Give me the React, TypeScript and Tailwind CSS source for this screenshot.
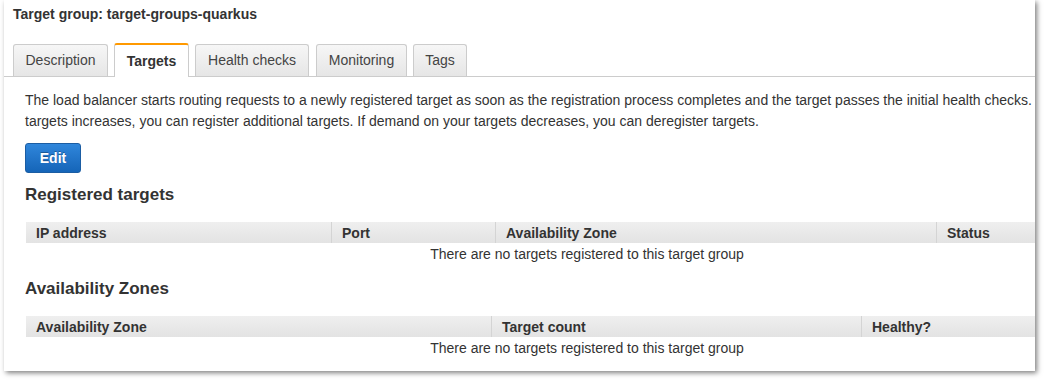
const tabs = [
  { label: "Description", cls: "w-[95px]" },
  { label: "Targets", cls: "ml-[6px] w-[75px]" },
  { label: "Health checks", cls: "ml-[6px] w-[114px]" },
  { label: "Monitoring", cls: "ml-[7px] w-[91px]" },
  { label: "Tags", cls: "ml-[6px] w-[54px]" },
];

const font = { fontFamily: '"Liberation Sans", Arial, sans-serif' };

function Table({ cols, widths }: { cols: string[]; widths: string[] }) {
  return (
    <div className="ml-[1px] w-[1122px]">
      <div className="flex h-[21px] bg-gradient-to-b from-[#efefef] to-[#e3e3e3]">
        {cols.map((c, i) => (
          <div
            key={c}
            className={`${widths[i]} flex items-center pl-[10px] text-[14px] font-bold leading-none text-[#333] ${i > 0 ? "border-l border-[#d4d4d4]" : ""}`}
          >
            {c}
          </div>
        ))}
      </div>
      <div className="h-[22px] text-center text-[14px] leading-[22px] text-[#333]">
        There are no targets registered to this target group
      </div>
    </div>
  );
}

export default function App() {
  return (
    <div className="h-[380px] w-[1044px] overflow-hidden bg-white" style={font}>
      <div className="ml-[4px] h-[371px] w-[1031px] overflow-hidden bg-white shadow-[2px_2px_5px_rgba(0,0,0,0.5)]">
        <div className="pl-[9px] pt-[6px] text-[14px] font-bold leading-[16px] text-[#333]">
          Target group: target-groups-quarkus
        </div>

        <div className="mt-[21px] flex items-end border-b border-[#cccccc] pl-[9px]">
          {tabs.map((t) =>
            t.label === "Targets" ? (
              <div
                key={t.label}
                className={`${t.cls} -mb-px flex h-[34px] items-center justify-center rounded-t-[3px] border border-b-0 border-[#cccccc] border-t-2 border-t-[#f90] bg-white text-[14px] font-bold text-[#333]`}
              >
                {t.label}
              </div>
            ) : (
              <div
                key={t.label}
                className={`${t.cls} flex h-[32px] items-center justify-center rounded-t-[3px] border border-b-0 border-[#cccccc] bg-gradient-to-b from-[#f6f6f6] to-[#e6e6e6] text-[14px] text-[#444]`}
              >
                {t.label}
              </div>
            )
          )}
        </div>

        <div className="pl-[21px]">
          <div className="mt-[13px] whitespace-nowrap text-[14px] leading-[21px] text-[#333]">
            <div>
              The load balancer starts routing requests to a newly registered target as soon as the registration process completes and the target passes the initial health checks. If demand on your
            </div>
            <div>
              targets increases, you can register additional targets. If demand on your targets decreases, you can deregister targets.
            </div>
          </div>

          <button className="mt-[11px] flex h-[30px] w-[56px] items-center justify-center rounded-[3px] border border-[#1b5da3] bg-gradient-to-b from-[#2f86db] to-[#1565b8] text-[14px] font-bold text-white [text-shadow:0_-1px_0_rgba(0,0,0,0.3)]">
            Edit
          </button>

          <div className="mt-[12px] text-[17px] font-bold leading-[20px] text-[#333]">Registered targets</div>
          <div className="mt-[17px]">
            <Table
              cols={["IP address", "Port", "Availability Zone", "Status"]}
              widths={["w-[305px]", "w-[164px]", "w-[441px]", "w-[212px]"]}
            />
          </div>

          <div className="mt-[14px] text-[17px] font-bold leading-[20px] text-[#333]">Availability Zones</div>
          <div className="mt-[17px]">
            <Table
              cols={["Availability Zone", "Target count", "Healthy?"]}
              widths={["w-[465px]", "w-[370px]", "w-[287px]"]}
            />
          </div>
        </div>
      </div>
    </div>
  );
}
